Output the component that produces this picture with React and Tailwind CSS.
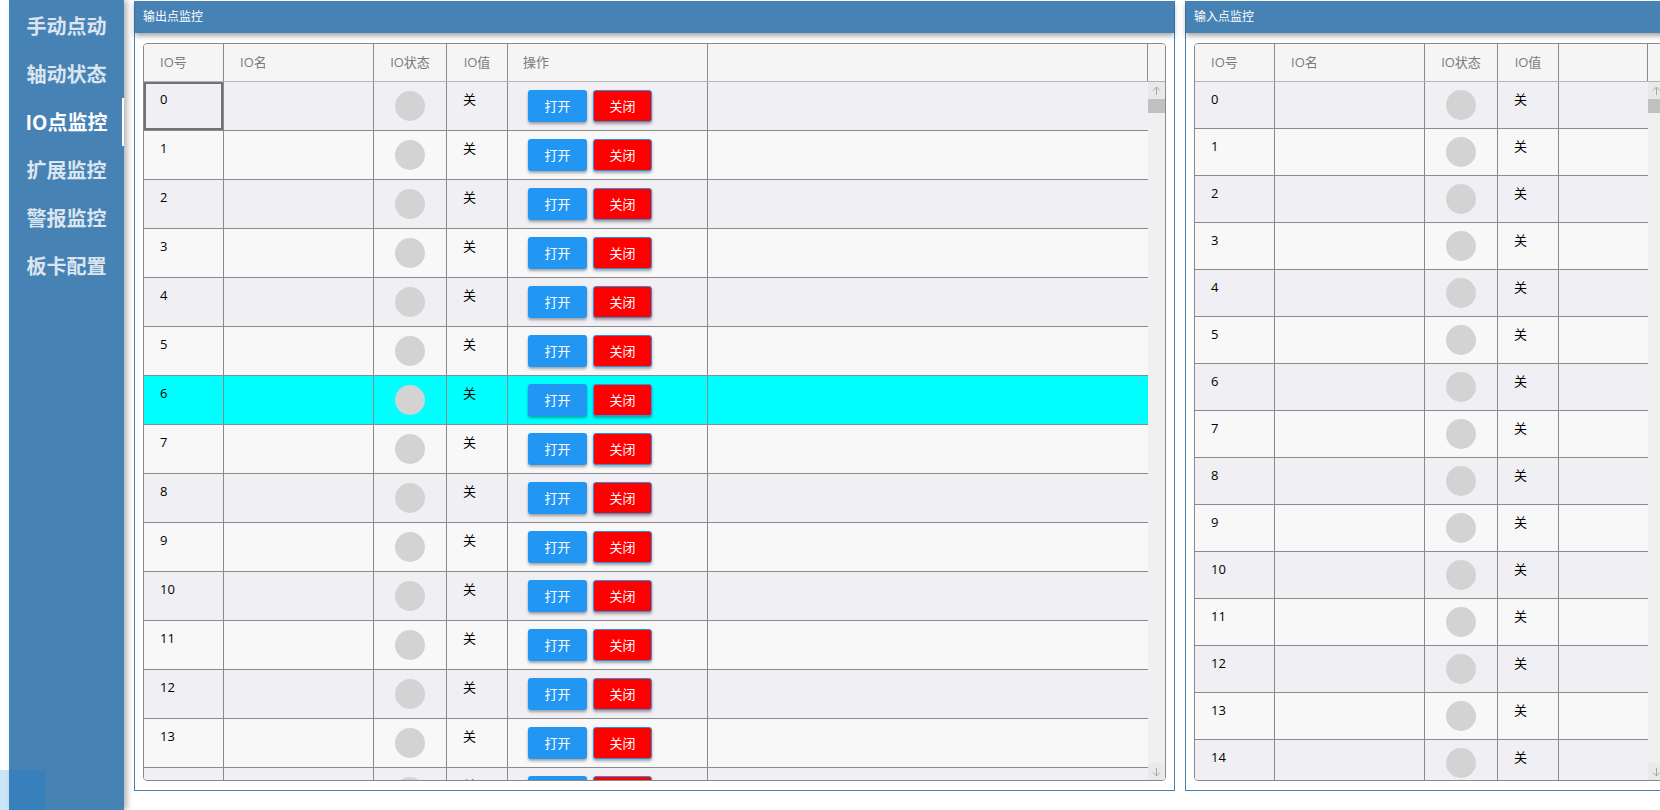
import React from "react";

const NAV = ["手动点动", "轴动状态", "IO点监控", "扩展监控", "警报监控", "板卡配置"];

function Arrow({ up }) {
  return (
    <svg width="9" height="10" viewBox="0 0 9 10" className={up ? "" : "rotate-180"}>
      <path d="M4.5 1 L4.5 9 M1 4.5 L4.5 1 L8 4.5" stroke="#a8a8a8" strokeWidth="1" fill="none" />
    </svg>
  );
}

function Scrollbar() {
  return (
    <div className="flex h-full w-[17px] shrink-0 flex-col bg-[#f0f0f0]">
      <div className="flex h-[17px] items-center justify-center bg-[#e9e9e9]">
        <Arrow up />
      </div>
      <div className="h-[14px] bg-[#c1c1c1]" />
      <div className="flex-1" />
      <div className="flex h-[17px] items-center justify-center bg-[#e9e9e9]">
        <Arrow />
      </div>
    </div>
  );
}

function Btn({ red, children }) {
  return (
    <div
      className={
        red
          ? "flex h-[32px] w-[59px] items-center justify-center rounded-[3px] border border-[#2f8ee6] bg-[#ff0000] text-[13px] text-white shadow-[0_2px_3px_rgba(0,0,0,0.35)]"
          : "flex h-[32px] w-[59px] items-center justify-center rounded-[3px] bg-[#2196f3] text-[13px] text-white shadow-[0_2px_3px_rgba(0,0,0,0.35)]"
      }
    >
      {children}
    </div>
  );
}

function IOTable({ withOps, rowH, fillerW }) {
  const rows = Array.from({ length: 16 }, (_, i) => i);
  return (
    <div className="flex h-[738px] flex-col overflow-hidden rounded-[4px] border border-[#8a8a8a]">
      <div className="flex h-[38px] shrink-0 border-b border-[#b4b4b4] bg-[#f5f5f5] text-[13px] text-[#7b7b7b]">
        <div className="flex w-[80px] shrink-0 items-center border-r border-[#8a8a8a] pl-[16px]">IO号</div>
        <div className="flex w-[150px] shrink-0 items-center border-r border-[#8a8a8a] pl-[16px]">IO名</div>
        <div className="flex w-[73px] shrink-0 items-center justify-center border-r border-[#8a8a8a]">IO状态</div>
        <div className="flex w-[61px] shrink-0 items-center justify-center border-r border-[#8a8a8a]">IO值</div>
        {withOps && (
          <div className="flex w-[200px] shrink-0 items-center border-r border-[#8a8a8a] pl-[15px]">操作</div>
        )}
        <div className={fillerW + " shrink-0 border-r border-[#8a8a8a]"} />
        <div className="w-[17px] shrink-0" />
      </div>
      <div className="flex min-h-0 flex-1">
        <div className="min-h-0 flex-1 overflow-hidden">
          {rows.map((i) => {
            const bg = withOps && i === 6 ? "bg-[#00ffff]" : i % 2 === 0 ? "bg-[#f0f0f4]" : "bg-[#f8f8f8]";
            return (
              <div key={i} className={"flex border-b border-[#8a8a8a] text-[13px] leading-[18px] text-black " + rowH + " " + bg}>
                <div
                  className={
                    withOps && i === 0
                      ? "w-[80px] shrink-0 border-r border-[#8a8a8a] pl-[16px] pt-[8px] shadow-[inset_0_0_0_2px_#727272]"
                      : "w-[80px] shrink-0 border-r border-[#8a8a8a] pl-[16px] pt-[8px]"
                  }
                >
                  {i}
                </div>
                <div className="w-[150px] shrink-0 border-r border-[#8a8a8a]" />
                <div className="flex w-[73px] shrink-0 items-center justify-center border-r border-[#8a8a8a]">
                  <div className="h-[30px] w-[30px] rounded-full bg-[#d3d3d3]" />
                </div>
                <div className="w-[61px] shrink-0 border-r border-[#8a8a8a] pl-[16px] pt-[8px]">关</div>
                {withOps && (
                  <div className="flex w-[200px] shrink-0 items-center gap-[6px] border-r border-[#8a8a8a] pl-[20px]">
                    <Btn>打开</Btn>
                    <Btn red>关闭</Btn>
                  </div>
                )}
                <div className="flex-1" />
              </div>
            );
          })}
        </div>
        <Scrollbar />
      </div>
    </div>
  );
}

function Panel({ title, width, children }) {
  return (
    <div className={"mt-[1px] flex h-[790px] shrink-0 flex-col border-x border-b border-[#4682b4] " + width}>
      <div className="relative z-10 flex h-[32px] shrink-0 items-center bg-[#4682b4] pl-[8px] text-[12px] text-white shadow-[0_3px_5px_rgba(0,0,0,0.35)]">
        {title}
      </div>
      <div className="flex-1 px-[8px] pb-[9px] pt-[10px]">{children}</div>
    </div>
  );
}

export default function App() {
  return (
    <div className="relative flex h-[810px] w-[1660px] overflow-hidden bg-white font-['Open_Sans','Noto_Sans_CJK_SC',sans-serif]">
      <div className="relative z-20 ml-[9px] flex h-full w-[115px] shrink-0 flex-col bg-[#4682b4] pt-[2px] shadow-[3px_0_6px_rgba(0,0,0,0.3)]">
        {NAV.map((n, i) => (
          <div
            key={n}
            className={
              i === 2
                ? "relative flex h-[48px] items-center justify-center font-['Noto_Sans_CJK_SC',sans-serif] text-[20px] font-bold text-white"
                : "relative flex h-[48px] items-center justify-center font-['Noto_Sans_CJK_SC',sans-serif] text-[20px] font-bold text-[#dbe5ef]"
            }
          >
            {n}
            {i === 2 && <div className="absolute right-0 top-0 h-[48px] w-[2px] bg-white" />}
          </div>
        ))}
      </div>

      <div className="ml-[10px] flex">
        <Panel title="输出点监控" width="w-[1041px]">
          <IOTable withOps rowH="h-[49px]" fillerW="w-[440px]" />
        </Panel>
        <div className="ml-[10px]">
          <Panel title="输入点监控" width="w-[490px]">
            <IOTable rowH="h-[47px]" fillerW="w-[89px]" />
          </Panel>
        </div>
      </div>

      <div className="absolute left-0 top-[770px] z-30 h-[40px] w-[45px] bg-[rgba(0,120,215,0.2)]" />
    </div>
  );
}
